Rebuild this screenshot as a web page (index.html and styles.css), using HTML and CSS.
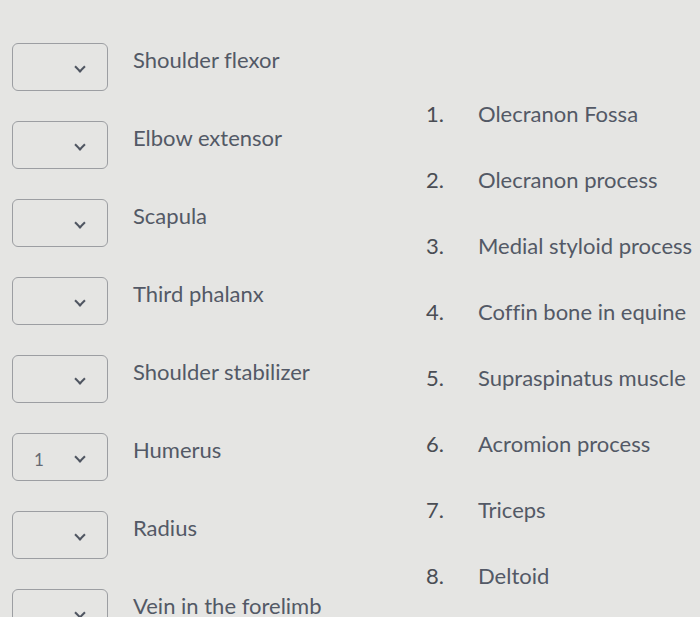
FILE: index.html
```html
<!DOCTYPE html>
<html lang="en">
	<head>
		<meta charset="UTF-8" />
		<meta name="viewport" content="width=device-width, initial-scale=1.0" />
		<title>Matching</title>
		<link rel="stylesheet" href="styles.css">
	</head>
	<body>
		<main class="matching">
			<section class="prompts">
				<div class="prompt-row">
					<div class="answer-box"><span class="answer-value"></span><span class="chevron"></span></div>
					<span class="prompt-label">Shoulder flexor</span>
				</div>
				<div class="prompt-row">
					<div class="answer-box"><span class="answer-value"></span><span class="chevron"></span></div>
					<span class="prompt-label">Elbow extensor</span>
				</div>
				<div class="prompt-row">
					<div class="answer-box"><span class="answer-value"></span><span class="chevron"></span></div>
					<span class="prompt-label">Scapula</span>
				</div>
				<div class="prompt-row">
					<div class="answer-box"><span class="answer-value"></span><span class="chevron"></span></div>
					<span class="prompt-label">Third phalanx</span>
				</div>
				<div class="prompt-row">
					<div class="answer-box"><span class="answer-value"></span><span class="chevron"></span></div>
					<span class="prompt-label">Shoulder stabilizer</span>
				</div>
				<div class="prompt-row">
					<div class="answer-box"><span class="answer-value">1</span><span class="chevron"></span></div>
					<span class="prompt-label">Humerus</span>
				</div>
				<div class="prompt-row">
					<div class="answer-box"><span class="answer-value"></span><span class="chevron"></span></div>
					<span class="prompt-label">Radius</span>
				</div>
				<div class="prompt-row">
					<div class="answer-box"><span class="answer-value"></span><span class="chevron"></span></div>
					<span class="prompt-label">Vein in the forelimb</span>
				</div>
			</section>
			<ol class="choices">
				<li class="choice"><span class="choice-num">1.</span><span class="choice-text">Olecranon Fossa</span></li>
				<li class="choice"><span class="choice-num">2.</span><span class="choice-text">Olecranon process</span></li>
				<li class="choice"><span class="choice-num">3.</span><span class="choice-text">Medial styloid process</span></li>
				<li class="choice"><span class="choice-num">4.</span><span class="choice-text">Coffin bone in equine</span></li>
				<li class="choice"><span class="choice-num">5.</span><span class="choice-text">Supraspinatus muscle</span></li>
				<li class="choice"><span class="choice-num">6.</span><span class="choice-text">Acromion process</span></li>
				<li class="choice"><span class="choice-num">7.</span><span class="choice-text">Triceps</span></li>
				<li class="choice"><span class="choice-num">8.</span><span class="choice-text">Deltoid</span></li>
			</ol>
		</main>
	</body>
</html>
```
FILE: styles.css
```css
html,
body {
	margin: 0;
	height: 100%;
	overflow: hidden;
}
body {
	background: #e5e5e3;
	font-family: Lato, "Open Sans", sans-serif;
	font-variant-ligatures: none;
	color: #535966;
}
.matching {
	display: flex;
	height: 617px;
}
/* left column: dropdown + term */
.prompts {
	width: 400px;
	padding: 43px 0 0 12px;
	box-sizing: border-box;
	display: flex;
	flex-direction: column;
	gap: 30px;
}
.prompt-row {
	display: flex;
	align-items: flex-start;
	gap: 25px;
	flex-shrink: 0;
}
.answer-box {
	width: 96px;
	height: 48px;
	box-sizing: border-box;
	border: 1.5px solid #9c9ea2;
	border-radius: 6px;
	display: flex;
	align-items: center;
	padding: 4px 0 0 21px;
}
.answer-value {
	width: 38px;
	font-size: 17px;
	color: #666a73;
}
.chevron {
	width: 6px;
	height: 6px;
	margin-left: 4px;
	margin-top: -4px;
	border-right: 2px solid #4f5561;
	border-bottom: 2px solid #4f5561;
	transform: rotate(45deg);
}
.prompt-label {
	font-size: 22px;
	line-height: 26px;
	padding-top: 4px;
	white-space: nowrap;
}
/* right column: numbered options */
.choices {
	list-style: none;
	margin: 0;
	padding: 101px 0 0 0;
	display: flex;
	flex-direction: column;
}
.choice {
	display: flex;
	height: 66px;
	flex-shrink: 0;
	font-size: 22px;
	line-height: 26px;
	white-space: nowrap;
}
.choice-num {
	width: 44px;
	text-align: right;
	color: #4a4d54;
}
.choice-text {
	margin-left: 34px;
}
```
